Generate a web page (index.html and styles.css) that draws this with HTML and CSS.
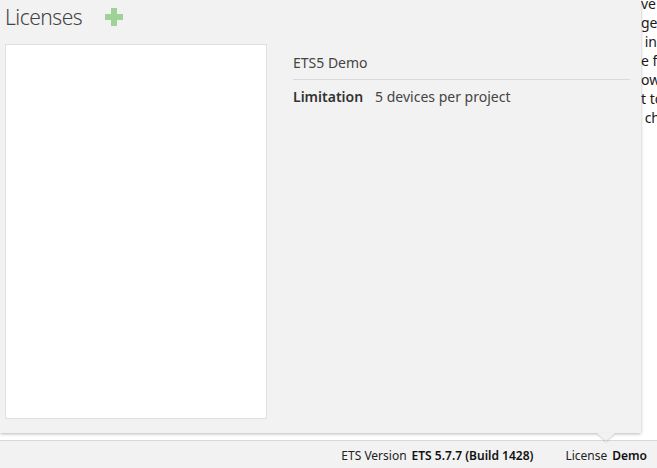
FILE: index.html
```html
<!DOCTYPE html>
<html>
<head>
<meta charset="utf-8">
<link rel="stylesheet" href="styles.css">
</head>
<body>
<div class="page">
  <div class="doc">
    <div class="doc-line">ve</div>
    <div class="doc-line">ge</div>
    <div class="doc-line">&nbsp;in</div>
    <div class="doc-line">e fo</div>
    <div class="doc-line">ow</div>
    <div class="doc-line">t to</div>
    <div class="doc-line">&nbsp;ch</div>
  </div>
  <div class="status">
    <span class="label">ETS Version</span><span class="value">ETS 5.7.7 (Build 1428)</span>
    <span class="label lic">License</span><span class="value">Demo</span>
  </div>
</div>
<div class="popup">
  <div class="head">
    <h1 class="title">Licenses</h1>
    <svg class="plus" width="18" height="18" viewBox="0 0 18 18"><path d="M6 0h6v6h6v6h-6v6h-6v-6h-6v-6h6z" fill="#9ed297"/></svg>
  </div>
  <div class="body">
    <div class="list"></div>
    <div class="detail">
      <div class="name">ETS5 Demo</div>
      <div class="row"><span class="key">Limitation</span><span class="val">5 devices per project</span></div>
    </div>
  </div>
  <div class="arrow"></div>
</div>
</body>
</html>
```
FILE: styles.css
```css
html, body { margin: 0; padding: 0; }
body {
  width: 657px; height: 468px; overflow: hidden; background: #fff;
  font-family: "Noto Sans", "Open Sans", sans-serif; color: #333;
  position: relative;
}
.page { display: flex; flex-direction: column; height: 468px; }
.doc {
  flex: 1; padding-left: 641px; margin-top: -6px; font-size: 14px; line-height: 19px;
  color: #1a1a1a; white-space: nowrap; overflow: hidden;
}
.doc-line { height: 19px; }
.status {
  height: 28px; box-sizing: border-box; border-top: 1px solid #d8d8d8; background: #f2f2f2;
  display: flex; align-items: center; justify-content: flex-end; padding-right: 10px;
  font-size: 12px; color: #222; padding-top: 1px;
}
.status .label { margin-right: 5px; }
.status .value { font-weight: 600; color: #111; }
.status .lic { margin-left: 32px; }
.popup {
  position: absolute; left: 0; top: 0; width: 641px; height: 433px;
  background: #f2f2f2; box-shadow: 0 1px 3px rgba(0,0,0,0.28);
  box-sizing: border-box; padding: 0 0 0 5px;
  display: flex; flex-direction: column;
}
.head { display: flex; align-items: center; height: 44px; }
.title {
  margin: 0; font-weight: 300; font-size: 21px; color: #444; letter-spacing: -0.5px;
  line-height: 30px; margin-top: -11px;
}
.plus { margin-left: 23px; margin-top: -10px; }
.body { display: flex; flex: 1; padding-bottom: 14px; }
.list { width: 262px; background: #fff; border: 1px solid #e0e0e0; box-sizing: border-box; }
.detail { flex: 1; padding: 9px 11px 0 26px; }
.name {
  font-size: 14px; color: #444; padding-bottom: 6px; border-bottom: 1px solid #dadada;
  line-height: 20px;
}
.row { font-size: 14px; line-height: 20px; margin-top: 7px; color: #444; }
.key { font-weight: 600; color: #333; margin-right: 12px; }
.arrow {
  position: absolute; left: 597px; bottom: -8px; width: 0; height: 0;
  border-left: 9px solid transparent; border-right: 9px solid transparent;
  border-top: 8px solid #f2f2f2; filter: drop-shadow(0 1px 1px rgba(0,0,0,0.2));
}
```
